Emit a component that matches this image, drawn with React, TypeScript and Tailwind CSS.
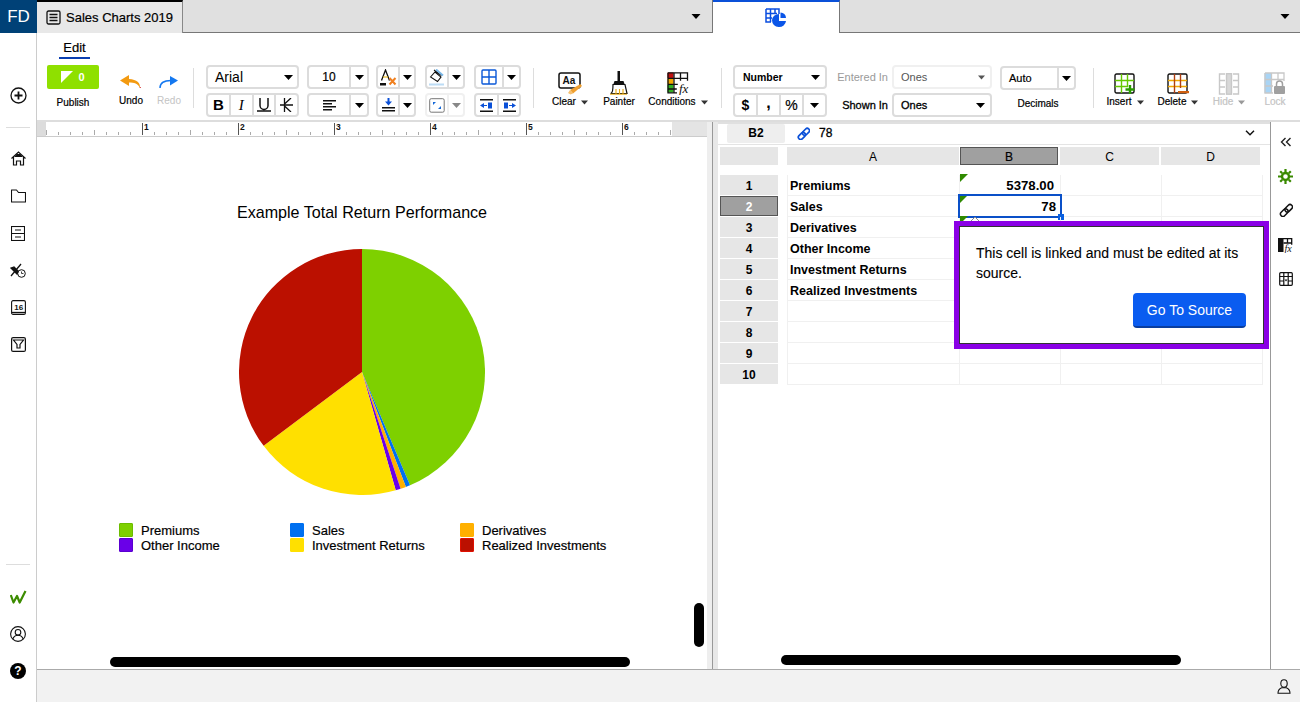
import React from "react";

const Caret = ({ c = "#000", w = 9 }: { c?: string; w?: number }) => (
  <svg width={w} height={5} viewBox="0 0 9 5"><path d="M0 0h9L4.5 5z" fill={c} /></svg>
);

const Box = ({ w, children, cls = "" }: { w: number; children: React.ReactNode; cls?: string }) => (
  <div style={{ width: w }} className={"flex items-stretch h-[24px] border-2 border-[#dcdcdc] rounded-[4px] overflow-hidden " + cls}>
    {children}
  </div>
);

const Cell = ({ children, w, line = true, light = false }: { children: React.ReactNode; w?: number; line?: boolean; light?: boolean }) => (
  <div
    style={w ? { width: w } : undefined}
    className={"flex items-center justify-center shrink-0 " + (w ? "" : "flex-1 ") + (line ? "border-r-2 " + (light ? "border-[#f0f0f0]" : "border-[#dcdcdc]") : "")}
  >
    {children}
  </div>
);

const Split = ({ w, icon, iconW, caretColor, light, cls }: { w: number; icon: React.ReactNode; iconW: number; caretColor?: string; light?: boolean; cls?: string }) => (
  <Box w={w} cls={cls}>
    <Cell w={iconW} light={light}>{icon}</Cell>
    <Cell line={false}><Caret c={caretColor} /></Cell>
  </Box>
);

const Sep = () => <div className="w-[1px] h-[40px] bg-[#dddddd] mt-[3px] shrink-0" />;

const Action = ({ w, label, icon, caret = false, gray = false }: { w: number; label: string; icon: React.ReactNode; caret?: boolean; gray?: boolean }) => (
  <div style={{ width: w }} className="flex flex-col items-center shrink-0">
    <div className="h-[27px] flex items-end justify-center mt-[3px]">{icon}</div>
    <div className={"flex items-center gap-[5px] text-[10px] leading-[12px] mt-[1px] [-webkit-text-stroke:0.2px] " + (gray ? "text-[#c4c4c4]" : "text-black")}>
      {label}
      {caret && <Caret c={gray ? "#999" : "#333"} w={7} />}
    </div>
  </div>
);

const DocIcon = () => (
  <svg width="15" height="15" viewBox="0 0 15 15" fill="none" stroke="#111" strokeWidth="1.3">
    <rect x="1" y="1" width="13" height="13" rx="1.5" />
    <path d="M3.5 4.5h8M3.5 7.5h8M3.5 10.5h8" />
  </svg>
);

const TabSheetIcon = () => (
  <svg width="22" height="20" viewBox="0 0 22 20">
    <g fill="none" stroke="#0a4ee0" strokeWidth="1.5">
      <path d="M1 1h13v5M1 1v13h5M1 5.5h11M1 10h6M5.5 1v13M10 1v5" />
    </g>
    <path d="M14 7a7 6.5 0 1 0 7 7h-7z" fill="#0a55e8" transform="translate(0 -1)" />
    <path d="M15.5 4.5a5.5 5.5 0 0 1 5.5 5.5h-5.5z" fill="#0a55e8" />
  </svg>
);

const UndoIcon = () => (
  <svg width="22" height="14" viewBox="0 0 22 14" fill="none">
    <path d="M9 0L0 5.5 9 11V7.5c5 0 9 1 11 5.5 .5-5-3-8.500-11-9z" fill="#f39a10" />
    <path d="M20 13l.5-1" stroke="#d02020" strokeWidth="1" />
  </svg>
);
const RedoIcon = () => (
  <svg width="20" height="14" viewBox="0 0 20 14" fill="none">
    <path d="M11 1l8 4.500-8 5z" fill="#1478f0" />
    <path d="M1 13c0-5 4-7.500 11-7.500" stroke="#1478f0" strokeWidth="1.500" />
  </svg>
);

const StrikeIcon = () => (
  <svg width="13" height="14" viewBox="0 0 13 14" fill="none" stroke="#111" strokeWidth="1.3">
    <path d="M0 7h13M4.500 0v14M11 0L4.500 6M11 14L4.500 8" />
  </svg>
);
const UnderlineIcon = () => (
  <svg width="14" height="14" viewBox="0 0 14 14" fill="none" stroke="#111" strokeWidth="1.3">
    <path d="M3 0v7.500a4 4 0 0 0 8 0V0M0 13h14" strokeWidth="1.500" />
  </svg>
);
const AlignIcon = () => (
  <svg width="13" height="11" viewBox="0 0 13 11" fill="#111"><path d="M0 0h13v1.500H0zM0 3h9v1.500H0zM0 6h13v1.500H0zM0 9h9v1.500H0z" /></svg>
);
const FontColorIcon = () => (
  <svg width="17" height="17" viewBox="0 0 17 17" fill="none">
    <path d="M1.500 11.500L5.500 1l4 10.500" stroke="#111" strokeWidth="1.300" />
    <path d="M3 8h5" stroke="#e8b000" strokeWidth="1" />
    <rect x="0" y="14" width="6" height="2.500" fill="#111" />
    <path d="M9.500 9l6 6.500M15.500 9l-6 6.500" stroke="#f08020" strokeWidth="2" />
  </svg>
);
const FillIcon = () => (
  <svg width="16" height="17" viewBox="0 0 16 17" fill="none">
    <path d="M5 1l7.500 5.500M1.500 8L6 3l6 5-3.500 4.500z" stroke="#111" strokeWidth="1.100" />
    <path d="M7 0.500l7 6" stroke="#7ab8e8" strokeWidth="2" />
    <rect x="0" y="14.500" width="15" height="2" fill="#bcdcf5" />
  </svg>
);
const BorderIcon = () => (
  <svg width="16" height="16" viewBox="0 0 16 16" fill="none" stroke="#0a58d8" strokeWidth="1.400">
    <rect x="1" y="1" width="14" height="14" rx="1" />
    <path d="M8 1v14M1 8h14" />
  </svg>
);
const VAlignIcon = () => (
  <svg width="13" height="14" viewBox="0 0 13 14">
    <path d="M5.500 0h2v3.500H10L6.500 7.500 3 3.500h2.500z" fill="#0a50d8" />
    <path d="M0 9h13v1.600H0zM0 12h13v1.600H0z" fill="#111" />
  </svg>
);
const ResizeIcon = () => (
  <svg width="16" height="15" viewBox="0 0 16 15" fill="none">
    <rect x="0.700" y="0.700" width="14.500" height="13.500" rx="1.500" stroke="#777" strokeWidth="1" />
    <path d="M4 7V4h3z" fill="#1468d8" />
    <path d="M12 8v3H9z" fill="#1468d8" />
  </svg>
);
const IndentIcon = ({ flip = false }: { flip?: boolean }) => (
  <svg width="13" height="13" viewBox="0 0 13 13">
    <path d="M0 0h13v1.500H0zM0 11.500h13V13H0z" fill="#111" />
    {flip ? (
      <g fill="#0a50d8"><rect x="1" y="3.500" width="4" height="6" /><path d="M6 6h3V4l4 2.500L9 9V7H6z" /></g>
    ) : (
      <g fill="#0a50d8"><rect x="8" y="3.500" width="4" height="6" /><path d="M7 6H4V4L0 6.500 4 9V7h3z" /></g>
    )}
  </svg>
);

const ClearIcon = () => (
  <svg width="24" height="23" viewBox="0 0 24 23" fill="none">
    <rect x="1" y="1" width="21" height="15" rx="2" stroke="#111" strokeWidth="1.500" />
    <text x="4.500" y="12" fontSize="10" fontWeight="700" fill="#111" fontFamily="Liberation Sans">Aa</text>
    <path d="M22.500 12l1.500 2-9 7.500-3-3.500z" fill="#f0a030" />
    <path d="M12 18l3 3.500-2.500 1L10 21z" fill="#f6c070" />
  </svg>
);
const PainterIcon = () => (
  <svg width="18" height="24" viewBox="0 0 18 24" fill="none">
    <rect x="7.500" y="0" width="2.500" height="10" fill="#111" />
    <path d="M4.500 10h9l1 3h-11z" fill="#111" />
    <path d="M3 13.500h12l2 9H0.500c2 0 2.500-4 2.500-9z" stroke="#111" strokeWidth="1.200" />
    <path d="M6 23v-5M9.500 23v-5M13 23v-5" stroke="#e8a810" strokeWidth="1.100" />
    <path d="M0 23.200h17" stroke="#e8a810" strokeWidth="1" />
  </svg>
);
const ConditionsIcon = () => (
  <svg width="22" height="23" viewBox="0 0 22 23" fill="none">
    <rect x="0.500" y="0.500" width="6" height="5.500" fill="#c01010" />
    <rect x="0.500" y="6.500" width="6" height="5.500" fill="#f0a800" />
    <rect x="0.500" y="12.500" width="6" height="8" fill="#30b020" />
    <path d="M1 .8h19.500v8M1 .8v20h9M.8 6.300h19.500M.8 12.300h10M.8 17h9M7 .8v20M13.500 .8v8" stroke="#111" strokeWidth="1.300" />
    <text x="12" y="21" fontSize="13" fontStyle="italic" fontFamily="Liberation Serif" fill="#111">fx</text>
  </svg>
);
const InsertIcon = () => (
  <svg width="22" height="22" viewBox="0 0 22 22" fill="none">
    <rect x="1" y="1" width="19" height="19" rx="1.500" stroke="#111" strokeWidth="1.400" />
    <path d="M1 7.500h19M1 13.500h13M7.500 1v19M13.500 1v13" stroke="#64c800" strokeWidth="1.400" />
    <path d="M16 12v9M11.500 16.500h9" stroke="#2a9a00" strokeWidth="2.400" />
  </svg>
);
const DeleteIcon = () => (
  <svg width="22" height="22" viewBox="0 0 22 22" fill="none">
    <rect x="1" y="1" width="19" height="19" rx="1.500" stroke="#111" strokeWidth="1.400" />
    <path d="M1 7.500h19M1 13.500h19" stroke="#f0a800" strokeWidth="1.400" />
    <path d="M7.500 1v19M13.500 1v14" stroke="#b04010" strokeWidth="1.400" />
    <rect x="11" y="18" width="11" height="2.200" fill="#d06010" />
  </svg>
);
const HideIcon = () => (
  <svg width="22" height="22" viewBox="0 0 22 22" fill="none" stroke="#c8c8c8" strokeWidth="1.400">
    <path d="M7 1H1.500v20H7M15 1h5.500v20H15M1.500 7.500H7M1.500 14H7M15 7.500h5.500M15 14h5.500" />
    <rect x="8.500" y="0.700" width="5" height="20.500" fill="#d8d8d8" stroke="#c8c8c8" />
  </svg>
);
const LockIcon = () => (
  <svg width="22" height="23" viewBox="0 0 22 23" fill="none">
    <rect x="0.500" y="1" width="7" height="20" fill="#a8d4f5" />
    <path d="M1 1h19v8M1 1v20h8M1 7.500h19M1 14h8M7.500 1v20M14 1v7" stroke="#c8c8c8" strokeWidth="1.300" />
    <rect x="10" y="14" width="11" height="8" rx="1" fill="#a0a0a0" />
    <path d="M12.500 14v-2a3 3 0 0 1 6 0v2" stroke="#a0a0a0" strokeWidth="1.500" />
  </svg>
);

const RailIcon = ({ children }: { children: React.ReactNode }) => (
  <div className="w-[18px] h-[18px] flex items-center justify-center">{children}</div>
);

const LeftRail = () => (
  <div className="w-[37px] flex flex-col shrink-0">
    <div className="h-[33px] bg-[#004177] text-white text-[17px] leading-[33px] text-center">FD</div>
    <div className="flex-1 flex flex-col items-center border-r border-[#cccccc]">
      <div className="mt-[53px]">
        <RailIcon>
          <svg width="17" height="17" viewBox="0 0 17 17" fill="none" stroke="#111">
            <circle cx="8.500" cy="8.500" r="7.500" strokeWidth="1.300" />
            <path d="M4.500 8.500h8M8.500 4.500v8" strokeWidth="1.800" />
          </svg>
        </RailIcon>
      </div>
      <div className="w-[24px] h-[1px] bg-[#dddddd] mt-[23px] mb-[22px]" />
      <div className="flex flex-col gap-[19px]">
        <RailIcon>
          <svg className="mb-[2px]" width="15" height="15" viewBox="0 0 15 15" fill="none" stroke="#111" strokeWidth="1.200">
            <path d="M.5 7.500L7.500 1l7 6.500M2.500 6v8h3v-4h4v4h3V6" />
            <path d="M6 3.500h3l1.500 2h-6z" fill="#111" />
          </svg>
        </RailIcon>
        <RailIcon>
          <svg width="15" height="14" viewBox="0 0 15 14" fill="none" stroke="#111" strokeWidth="1.100">
            <path d="M.5 13V1h5l2 2.500h7V13z" strokeLinejoin="round" />
          </svg>
        </RailIcon>
        <RailIcon>
          <svg width="14" height="15" viewBox="0 0 14 15" fill="none" stroke="#111" strokeWidth="1.100">
            <rect x=".5" y=".5" width="13" height="14" />
            <path d="M.5 7.500h13M4 4h6M4 11h6" />
          </svg>
        </RailIcon>
        <RailIcon>
          <svg width="16" height="15" viewBox="0 0 16 15" fill="none" stroke="#111">
            <path d="M1 13L11 1" strokeWidth="1.300" />
            <path d="M1 5l5 5M1 5l3-1 4 4-1 3z" fill="#111" strokeWidth="1.300" />
            <circle cx="11.500" cy="10.500" r="3.800" strokeWidth="1" />
            <path d="M11.500 8.500v2h2" strokeWidth=".8" />
          </svg>
        </RailIcon>
        <RailIcon>
          <svg width="15" height="15" viewBox="0 0 15 15" fill="none" stroke="#111">
            <rect x=".6" y=".6" width="13.800" height="13.800" rx="1.500" strokeWidth="1.100" />
            <path d="M1 12.500h13" strokeWidth="1.300" />
            <text x="3.300" y="10" fontSize="8" fontWeight="700" fill="#111" stroke="none" fontFamily="Liberation Sans">16</text>
          </svg>
        </RailIcon>
        <RailIcon>
          <svg width="15" height="15" viewBox="0 0 15 15" fill="none" stroke="#111" strokeWidth="1.200">
            <rect x=".6" y=".6" width="13.800" height="13.800" rx="1.500" />
            <path d="M2.500 3h10l-3.500 4.500v3.500H6V7.500z" />
          </svg>
        </RailIcon>
      </div>
      <div className="mt-auto flex flex-col items-center pb-[22px]">
        <div className="w-[24px] h-[1px] bg-[#dddddd] mb-[23px]" />
        <RailIcon>
          <svg width="17" height="15" viewBox="0 0 17 15" fill="none" stroke="#3c8c00" strokeWidth="2.200" strokeLinejoin="round">
            <path d="M.8 5l2.700 7.500L7 6l2.700 6.500L15.500 1" />
          </svg>
        </RailIcon>
        <div className="mt-[19px]">
          <RailIcon>
            <svg width="16" height="16" viewBox="0 0 16 16" fill="none" stroke="#111" strokeWidth="1.100">
              <circle cx="8" cy="8" r="7.400" />
              <circle cx="8" cy="6.300" r="2.800" />
              <path d="M2.800 13c1-2.500 3-3.700 5.200-3.700s4.200 1.200 5.200 3.700" />
            </svg>
          </RailIcon>
        </div>
        <div className="mt-[19px]">
          <RailIcon>
            <div className="w-[16px] h-[16px] rounded-full bg-black text-white text-[12px] font-bold leading-[16px] text-center">?</div>
          </RailIcon>
        </div>
      </div>
    </div>
  </div>
);

const TabBar = () => (
  <div className="h-[33px] flex shrink-0 bg-[#e0e0e0]">
    <div className="w-[676px] flex border-b border-r border-[#777777]">
      <div className="w-[146px] h-[33px] flex items-center gap-[5px] pl-[9px] bg-[#e8e8e8] border-t-2 border-t-black border-r border-r-[#888888] text-[13px] [-webkit-text-stroke:0.2px]">
        <DocIcon />
        Sales Charts 2019
      </div>
      <div className="flex-1 flex items-center justify-end pr-[11px]"><Caret w={10} /></div>
    </div>
    <div className="w-[127px] h-[33px] bg-white border-t-2 border-t-[#0a50d8] border-r border-r-[#777777] flex items-center justify-center">
      <TabSheetIcon />
    </div>
    <div className="flex-1 flex items-center justify-end pr-[10px] border-b border-[#777777]"><Caret w={10} /></div>
  </div>
);

const Ribbon = () => (
  <div className="h-[89px] shrink-0 bg-white border-b-2 border-[#dddddd]">
    <div className="h-[32px] pl-[22px]">
      <div className="w-[31px] h-[26px] pt-[7px] border-b-2 border-[#0a3eb0] text-[13px] leading-[16px] text-center [-webkit-text-stroke:0.2px]">Edit</div>
    </div>
    <div className="flex items-start">
      <div className="ml-[10px] w-[52px] shrink-0 flex flex-col items-center">
        <div className="w-[52px] h-[24px] bg-[#8fe000] rounded-[2px] flex items-center justify-center gap-[5px] text-white text-[11px] font-bold">
          <svg width="12" height="12" viewBox="0 0 12 12"><path d="M0 0h12L0 12z" fill="#fff" /></svg>
          0
        </div>
        <div className="text-[10px] leading-[12px] mt-[8px] [-webkit-text-stroke:0.2px]">Publish</div>
      </div>
      <div className="ml-[14px] w-[36px] shrink-0 flex flex-col items-center">
        <div className="mt-[10px]"><UndoIcon /></div>
        <div className="text-[10px] leading-[12px] mt-[6px] [-webkit-text-stroke:0.2px]">Undo</div>
      </div>
      <div className="ml-[1px] w-[38px] shrink-0 flex flex-col items-center">
        <div className="mt-[10px]"><RedoIcon /></div>
        <div className="text-[10px] leading-[12px] mt-[6px] text-[#c4c4c4]">Redo</div>
      </div>
      <div className="ml-[5px]"><Sep /></div>

      <div className="ml-[12px] flex flex-col gap-[4px] shrink-0">
        <Box w={93}>
          <div className="flex-1 flex items-center justify-between pl-[7px] pr-[4px] text-[14px]"><span className="pt-[1px]">Arial</span><Caret /></div>
        </Box>
        <Box w={93}>
          <Cell><span className="text-[15px] font-bold">B</span></Cell>
          <Cell><span className="text-[15px] italic font-['Liberation_Serif']">I</span></Cell>
          <Cell><UnderlineIcon /></Cell>
          <Cell line={false}><StrikeIcon /></Cell>
        </Box>
      </div>
      <div className="ml-[8px] flex flex-col gap-[4px] shrink-0">
        <Split w={62} iconW={42} icon={<span className="text-[12px] [-webkit-text-stroke:0.2px]">10</span>} />
        <Split w={62} iconW={42} icon={<AlignIcon />} />
      </div>
      <div className="ml-[7px] flex flex-col gap-[4px] shrink-0">
        <Split w={40} iconW={22} icon={<FontColorIcon />} />
        <Split w={40} iconW={22} icon={<VAlignIcon />} />
      </div>
      <div className="ml-[9px] flex flex-col gap-[4px] shrink-0">
        <Split w={40} iconW={22} icon={<FillIcon />} />
        <Split w={40} iconW={22} light caretColor="#888" icon={<ResizeIcon />} cls="border-[#f0f0f0]" />
      </div>
      <div className="ml-[9px] flex flex-col gap-[4px] shrink-0">
        <Split w={47} iconW={28} icon={<BorderIcon />} />
        <Box w={47}>
          <Cell w={23}><IndentIcon /></Cell>
          <Cell line={false}><IndentIcon flip /></Cell>
        </Box>
      </div>
      <div className="ml-[12px]"><Sep /></div>
      <div className="ml-[11px] flex shrink-0">
        <Action w={50} label="Clear" caret icon={<ClearIcon />} />
        <Action w={48} label="Painter" icon={<PainterIcon />} />
        <Action w={70} label="Conditions" caret icon={<ConditionsIcon />} />
      </div>
      <div className="ml-[8px]"><Sep /></div>
      <div className="ml-[11px] flex flex-col gap-[4px] shrink-0">
        <Box w={94}>
          <div className="flex-1 flex items-center justify-between pl-[8px] pr-[5px] text-[10.5px] font-bold"><span className="pt-[1px]">Number</span><Caret /></div>
        </Box>
        <Box w={94}>
          <Cell><span className="text-[14px] font-bold">$</span></Cell>
          <Cell><span className="text-[16px] font-bold leading-[14px] mb-[4px]">,</span></Cell>
          <Cell><span className="text-[14px] [-webkit-text-stroke:0.2px]">%</span></Cell>
          <Cell line={false}><Caret /></Cell>
        </Box>
      </div>
      <div className="ml-[9px] w-[52px] shrink-0 flex flex-col gap-[4px] text-right text-[11px] whitespace-nowrap">
        <div className="h-[24px] leading-[24px] text-[#9a9a9a]">Entered In</div>
        <div className="h-[24px] leading-[24px] [-webkit-text-stroke:0.3px]">Shown In</div>
      </div>
      <div className="ml-[4px] flex flex-col gap-[4px] shrink-0">
        <Box w={100} cls="border-[#f0f0f0]">
          <div className="flex-1 flex items-center justify-between pl-[7px] pr-[5px] text-[11px] text-[#555555]">Ones<Caret c="#555" w={7} /></div>
        </Box>
        <Box w={100}>
          <div className="flex-1 flex items-center justify-between pl-[7px] pr-[5px] text-[11px] [-webkit-text-stroke:0.3px]">Ones<Caret /></div>
        </Box>
      </div>
      <div className="ml-[8px] mt-[1px] flex flex-col items-center shrink-0">
        <Split w={76} iconW={57} icon={<span className="text-[11px] w-full pl-[7px] [-webkit-text-stroke:0.2px]">Auto</span>} />
        <div className="text-[10px] leading-[12px] mt-[8px] [-webkit-text-stroke:0.2px]">Decimals</div>
      </div>
      <div className="ml-[17px]"><Sep /></div>
      <div className="ml-[6px] flex shrink-0">
        <Action w={50} label="Insert" caret icon={<InsertIcon />} />
        <Action w={56} label="Delete" caret icon={<DeleteIcon />} />
        <Action w={46} label="Hide" caret gray icon={<HideIcon />} />
        <Action w={46} label="Lock" gray icon={<LockIcon />} />
      </div>
    </div>
  </div>
);

const Ruler = () => {
  const ticks = Array.from({ length: 53 }, (_, i) => i);
  return (
    <div className="h-[15px] shrink-0 border-b border-[#cccccc] flex bg-white">
      <svg width="670" height="14" viewBox="0 0 670 14">
        <rect x="0" y="0" width="9" height="14" fill="#dcdcdc" />
        <rect x="635" y="0" width="35" height="14" fill="#e4e4e4" />
        {ticks.map((i) => {
          const x = 9.500 + i * 12;
          const major = i % 8 === 0 && i > 0;
          const mid = i % 4 === 0;
          return <line key={i} x1={x} x2={x} y1={major ? 1 : mid ? 8 : 10} y2={13} stroke={major ? "#555" : "#aaa"} strokeWidth="1" />;
        })}
        {[1, 2, 3, 4, 5, 6].map((n) => (
          <text key={n} x={9 + n * 96 + 2} y={8} fontSize="8.500" fontWeight="700" fill="#111" fontFamily="Liberation Sans">{n}</text>
        ))}
      </svg>
    </div>
  );
};

const polar = (deg: number, r = 123) => {
  const a = (deg * Math.PI) / 180;
  return `${123 + r * Math.sin(a)} ${123 - r * Math.cos(a)}`;
};
const slice = (a0: number, a1: number) =>
  `M123 123L${polar(a0)}A123 123 0 ${a1 - a0 > 180 ? 1 : 0} 1 ${polar(a1)}Z`;

const slices: [number, number, string][] = [
  [0, 157, "#7ed000"],
  [157, 159.1, "#0070f0"],
  [159.1, 161.7, "#ffb000"],
  [161.7, 164.1, "#6a00e8"],
  [164.1, 233.1, "#ffe000"],
  [233.1, 360, "#bb1000"],
];

const legend: [string, string, string][] = [
  ["Premiums", "bg-[#7ed000]", "border-[#6cbc00]"],
  ["Sales", "bg-[#0070f0]", "border-[#0070f0]"],
  ["Derivatives", "bg-[#ffb000]", "border-[#ffb000]"],
  ["Other Income", "bg-[#6a00e8]", "border-[#5a00d0]"],
  ["Investment Returns", "bg-[#ffe000]", "border-[#ffe000]"],
  ["Realized Investments", "bg-[#bb1000]", "border-[#e01000]"],
];

const ChartPane = () => (
  <div className="relative w-[670px] shrink-0 flex flex-col bg-white">
    <Ruler />
    <div className="w-[650px] flex flex-col items-center">
      <div className="mt-[66px] h-[19px] text-[16.1px] leading-[19px]">Example Total Return Performance</div>
      <svg className="mt-[27px]" width="246" height="246" viewBox="0 0 246 246">
        {slices.map(([a, b, c]) => (
          <path key={c} d={slice(a, b)} fill={c} />
        ))}
      </svg>
    </div>
    <div className="mt-[28px] ml-[82px] grid grid-cols-[171px_170px_170px] gap-y-[1px]">
      {legend.map(([t, bg, b]) => (
        <div key={t} className="flex items-center gap-[8px] h-[14px] text-[13px] leading-[16px] [-webkit-text-stroke:0.2px]">
          <div className={"w-[14px] h-[14px] border rounded-[1px] " + bg + " " + b} />
          <span className="mt-[2px]">{t}</span>
        </div>
      ))}
    </div>
    <div className="absolute left-[73px] top-[535px] w-[520px] h-[10px] rounded-full bg-black" />
    <div className="absolute left-[657px] top-[481px] w-[10px] h-[44px] rounded-full bg-black" />
  </div>
);

const rows = ["Premiums", "Sales", "Derivatives", "Other Income", "Investment Returns", "Realized Investments", "", "", "", ""];

const Tri = ({ dy = 0 }: { dy?: number }) => (
  <div style={{ top: dy }} className="absolute left-0 w-[8px] h-[8px] bg-[#2f8a00] [clip-path:polygon(0_0,100%_0,0_100%)]" />
);

const SheetPane = () => (
  <div className="relative w-[552px] shrink-0 bg-white">
    <div className="h-[2px] bg-[#e0e0e0]" />
    <div className="h-[21px] flex items-center pl-[9px] pb-[2px] border-b border-[#e4e4e4]">
      <div className="w-[58px] h-[19px] bg-[#eeeeee] rounded-[2px] text-[12px] font-bold text-center leading-[19px]">B2</div>
      <div className="ml-[12px]">
        <svg width="13" height="13" viewBox="0 0 13 13" fill="none" stroke="#0a50d8" strokeWidth="1.700">
          <rect x="-3" y="-2" width="8" height="4.500" rx="2.200" transform="translate(4 9.500) rotate(-45)" />
          <rect x="-5" y="-2" width="8" height="4.500" rx="2.200" transform="translate(9.500 4) rotate(-45)" />
        </svg>
      </div>
      <div className="ml-[9px] text-[12px] [-webkit-text-stroke:0.3px]">78</div>
      <div className="ml-auto mr-[15px]">
        <svg width="10" height="6" viewBox="0 0 10 6" fill="none" stroke="#111" strokeWidth="1.400"><path d="M1 .7L5 4.800 9 .7" /></svg>
      </div>
    </div>
    <div className="flex mt-[2px] pl-[2px] h-[18px] text-[12px] leading-[20px] text-center">
      <div className="w-[58px] bg-[#e6e6e6]" />
      <div className="ml-[9px] w-[172px] bg-[#e6e6e6]">A</div>
      <div className="ml-[1px] w-[98px] bg-[#a0a0a0] border border-[#555555] leading-[18px] [-webkit-text-stroke:0.2px]">B</div>
      <div className="ml-[2px] w-[99px] bg-[#e6e6e6]">C</div>
      <div className="ml-[2px] w-[99px] bg-[#e6e6e6]">D</div>
    </div>
    <div className="mt-[10px] pl-[2px]">
      {rows.map((r, i) => (
        <div key={i} className="flex h-[21px]">
          <div className={"w-[58px] h-[20px] text-[12px] font-bold text-center " + (i === 1 ? "bg-[#a0a0a0] border border-[#555555] text-white leading-[20px]" : "bg-[#e6e6e6] leading-[22px]")}>
            {i + 1}
          </div>
          <div className="ml-[9px] w-[173px] h-[21px] border-l border-b border-r border-[#f0f0f0] pl-[2px] text-[12.500px] font-bold leading-[20px] pt-[1px]">{r}</div>
          <div className="relative w-[101px] h-[21px] border-b border-r border-[#f0f0f0] pr-[6px] pt-[1px] text-right text-[13.200px] font-bold leading-[20px]">
            {i === 0 && <>5378.00<Tri dy={-1} /></>}
            {i === 1 && (
              <span>
                <span className="mr-[-2px]">78</span>
                <Tri dy={-1} />
                <div className="absolute left-[-2px] top-[-2px] w-[104px] h-[24px] border-2 border-[#0a50c8]" />
                <div className="absolute left-[98px] top-[18px] w-[6px] h-[6px] bg-[#0a60e0]" />
              </span>
            )}
            {i === 2 && <Tri dy={-1} />}
          </div>
          <div className="w-[101px] border-b border-r border-[#f0f0f0]" />
          <div className="w-[101px] border-b border-r border-[#f0f0f0]" />
        </div>
      ))}
    </div>
    <svg className="absolute left-[250px] top-[94px]" width="14" height="7" viewBox="0 0 14 7">
      <path d="M1 7l6-6 6 6" fill="#fff" stroke="#888" strokeWidth="1" />
    </svg>
    <div className="absolute left-[236px] top-[99px] w-[315px] h-[128px] border-[5px] border-[#8a00e6] bg-white">
      <div className="h-full border border-[#333333] pl-[16px] pr-[16px] pt-[16px] flex flex-col">
        <div className="text-[14px] leading-[20px] [-webkit-text-stroke:0.1px]">This cell is linked and must be edited at its source.</div>
        <button className="self-end mt-[10px] mr-[1px] w-[113px] h-[35px] bg-[#0a5cf0] border-b-2 border-[#0a3ea0] rounded-[4px] text-white text-[14px] leading-[32px]">Go To Source</button>
      </div>
    </div>
    <div className="absolute left-[63px] top-[533px] w-[400px] h-[10px] rounded-full bg-black" />
  </div>
);

const RightRail = () => (
  <div className="w-[30px] shrink-0 border-l border-[#999999] flex flex-col items-center pt-[15px]">
    <svg width="12" height="10" viewBox="0 0 12 10" fill="none" stroke="#222" strokeWidth="1.400"><path d="M5.500 1L1.500 5l4 4M10.500 1l-4 4 4 4" /></svg>
    <div className="mt-[22px]">
      <svg width="15" height="15" viewBox="0 0 15 15" fill="none">
        <circle cx="7.500" cy="7.500" r="3.500" stroke="#3a8a00" strokeWidth="2.400" />
        <path d="M7.500 0v3M7.500 12v3M0 7.500h3M12 7.500h3M2.200 2.200l2 2M10.800 10.800l2 2M2.200 12.800l2-2M10.800 4.200l2-2" stroke="#3a8a00" strokeWidth="2.200" />
      </svg>
    </div>
    <div className="mt-[19px]">
      <svg width="14" height="14" viewBox="0 0 13 13" fill="none" stroke="#111" strokeWidth="1.400">
        <rect x="-3" y="-2" width="8" height="4.500" rx="2.200" transform="translate(4 9.500) rotate(-45)" />
        <rect x="-5" y="-2" width="8" height="4.500" rx="2.200" transform="translate(9.500 4) rotate(-45)" />
      </svg>
    </div>
    <div className="mt-[21px]">
      <svg width="15" height="15" viewBox="0 0 15 15" fill="none">
        <rect x="0" y="0" width="5.500" height="14" fill="#111" />
        <path d="M.7.7h13v6M5.500 5h8M9.500.7v4" stroke="#111" strokeWidth="1.300" />
        <text x="6.500" y="14" fontSize="10" fontStyle="italic" fontFamily="Liberation Serif" fill="#111">fx</text>
      </svg>
    </div>
    <div className="mt-[19px]">
      <svg width="14" height="14" viewBox="0 0 14 14" fill="none" stroke="#111" strokeWidth="1.200">
        <rect x=".7" y=".7" width="12.600" height="12.600" rx="1" />
        <path d="M.7 4.500h12.600M4.800 .7v3.800M9.200 .7v3.800M.7 9h4M9.300 9h4M4.800 4.500v8.800M9.200 4.500v8.800" />
        <path d="M5.500 7.500h3L7 9.500z" fill="#111" stroke="none" />
      </svg>
    </div>
  </div>
);

export default function App() {
  return (
    <div className="w-[1300px] h-[702px] flex bg-white text-black overflow-hidden font-['Liberation_Sans',Arial,sans-serif]">
      <LeftRail />
      <div className="flex-1 min-w-0 flex flex-col">
        <TabBar />
        <Ribbon />
        <div className="h-[547px] flex shrink-0">
          <ChartPane />
          <div className="w-[11px] shrink-0 flex">
            <div className="w-[5px] bg-[#eeeeee]" />
            <div className="w-[1px] bg-[#999999]" />
            <div className="w-[5px] bg-[#e8e8e8]" />
          </div>
          <SheetPane />
          <RightRail />
        </div>
        <div className="flex-1 bg-[#f2f2f2] border-t border-[#aaaaaa] flex items-center justify-end pr-[9px]">
          <svg width="14" height="15" viewBox="0 0 14 15" fill="none" stroke="#111" strokeWidth="1.100">
            <ellipse cx="7" cy="4.500" rx="3.200" ry="3.800" />
            <path d="M1 14.300c0-3 2-4.800 3.700-5.500h4.600c1.700.7 3.700 2.500 3.700 5.500z" />
          </svg>
        </div>
      </div>
    </div>
  );
}
